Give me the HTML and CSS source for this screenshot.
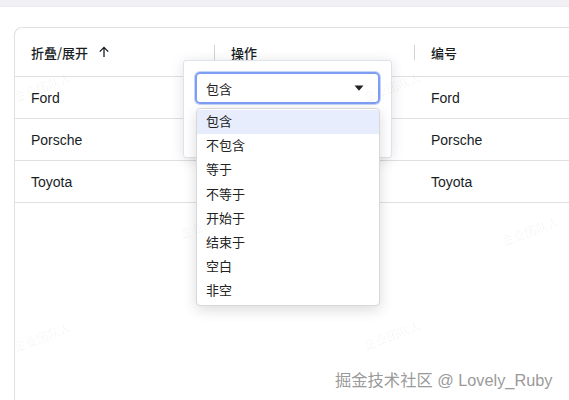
FILE: index.html
```html
<!DOCTYPE html>
<html lang="zh">
<head>
<meta charset="utf-8">
<link rel="stylesheet" href="styles.css">
</head>
<body>
<div class="topbar"></div>
<div class="wrap">
  <div class="grid">
    <div class="row header">
      <div class="cell">折叠/展开<span class="arrow">
        <svg width="12" height="12" viewBox="0 0 12 12"><path d="M6 11V1.6M1.8 5.6L6 1.4l4.2 4.2" fill="none" stroke="#181d1f" stroke-width="1.3"/></svg>
      </span><span class="sep"></span></div>
      <div class="cell">操作<span class="sep"></span></div>
      <div class="cell">编号</div>
    </div>
    <div class="row">
      <div class="cell"><span>Ford</span></div>
      <div class="cell"></div>
      <div class="cell"><span>Ford</span></div>
    </div>
    <div class="row">
      <div class="cell"><span>Porsche</span></div>
      <div class="cell"></div>
      <div class="cell"><span>Porsche</span></div>
    </div>
    <div class="row">
      <div class="cell"><span>Toyota</span></div>
      <div class="cell"></div>
      <div class="cell"><span>Toyota</span></div>
    </div>
  </div>
</div>

<div class="popup">
  <div class="select">
    <span>包含</span>
    <svg width="10" height="6" viewBox="0 0 10 6"><path d="M0.5 0.5h9L5 5.8z" fill="#222"/></svg>
  </div>
</div>

<ul class="options">
  <li class="active">包含</li>
  <li>不包含</li>
  <li>等于</li>
  <li>不等于</li>
  <li>开始于</li>
  <li>结束于</li>
  <li>空白</li>
  <li>非空</li>
</ul>

<div class="wm" style="left:12px;top:78px">企业团队人</div>
<div class="wm" style="left:362px;top:78px">企业团队人</div>
<div class="wm" style="left:178px;top:215px">企业团队人</div>
<div class="wm" style="left:500px;top:222px">企业团队人</div>
<div class="wm" style="left:12px;top:328px">企业团队人</div>
<div class="wm" style="left:362px;top:326px">企业团队人</div>

<div class="credit">掘金技术社区 @ Lovely_Ruby</div>
</body>
</html>
```

FILE: styles.css
```css
html, body {
  margin: 0;
  padding: 0;
  background: #fff;
  overflow: hidden;
  width: 569px;
  height: 400px;
  font-family: "Liberation Sans", "Noto Sans CJK SC", sans-serif;
  color: #181d1f;
}

.topbar {
  height: 6px;
  background: #f1f1f5;
  border-bottom: 1px solid #ececf0;
}

.wrap {
  padding: 20px 0 0 14px;
}

.grid {
  width: 555px;
  height: 373px;
  border: 1px solid #e0e0e0;
  border-right: none;
  border-bottom: none;
  border-radius: 8px 0 0 0;
  box-sizing: border-box;
  overflow: hidden;
}

.row {
  display: flex;
  height: 41px;
  border-bottom: 1px solid #e0e0e0;
}

.row.header {
  height: 48px;
}

.cell {
  width: 200px;
  flex: none;
  box-sizing: border-box;
  padding-left: 16px;
  display: flex;
  align-items: center;
  position: relative;
  font-size: 14px;
}

.cell:last-child {
  width: 154px;
}

.header .cell {
  font-family: "Noto Sans CJK SC", sans-serif;
  font-size: 13px;
  font-weight: 500;
}

.arrow {
  display: inline-flex;
  margin-left: 10px;
}

.sep {
  position: absolute;
  right: 0;
  top: 17px;
  width: 1px;
  height: 15px;
  background: #cfd3d9;
}

.popup {
  position: absolute;
  left: 183px;
  top: 60px;
  width: 209px;
  height: 98px;
  box-sizing: border-box;
  background: #fff;
  border: 1px solid #dde2eb;
  border-radius: 3px;
  box-shadow: 0 2px 14px rgba(0, 0, 0, 0.12);
  padding: 11px 11px;
}

.select {
  height: 32px;
  box-sizing: border-box;
  border: 2px solid #7d9ef3;
  border-radius: 5px;
  box-shadow: 0 0 0 1px #c5d4fb;
  display: flex;
  align-items: center;
  justify-content: space-between;
  padding: 0 14px 0 9px;
  font-size: 13px;
  color: #222;
}

.options {
  position: absolute;
  left: 196px;
  top: 108px;
  width: 184px;
  margin: 0;
  padding: 1px 0;
  list-style: none;
  background: #fff;
  border: 1px solid #d6d8dc;
  border-radius: 4px;
  box-sizing: border-box;
  box-shadow: 0 4px 14px rgba(0, 0, 0, 0.14);
}

.options li {
  height: 24.2px;
  line-height: 24px;
  padding-left: 9px;
  font-size: 13px;
  color: #222;
}

.options li.active {
  background: #e7edfc;
}

.wm {
  position: absolute;
  font-size: 12px;
  color: rgba(0, 0, 0, 0.05);
  transform: rotate(-20deg);
  font-family: "Noto Sans CJK SC", sans-serif;
  white-space: nowrap;
}

.credit {
  position: absolute;
  left: 335px;
  top: 367px;
  font-size: 16.3px;
  color: #9a9a9a;
  text-shadow: 0 0 2px #fff;
  white-space: nowrap;
}
```
